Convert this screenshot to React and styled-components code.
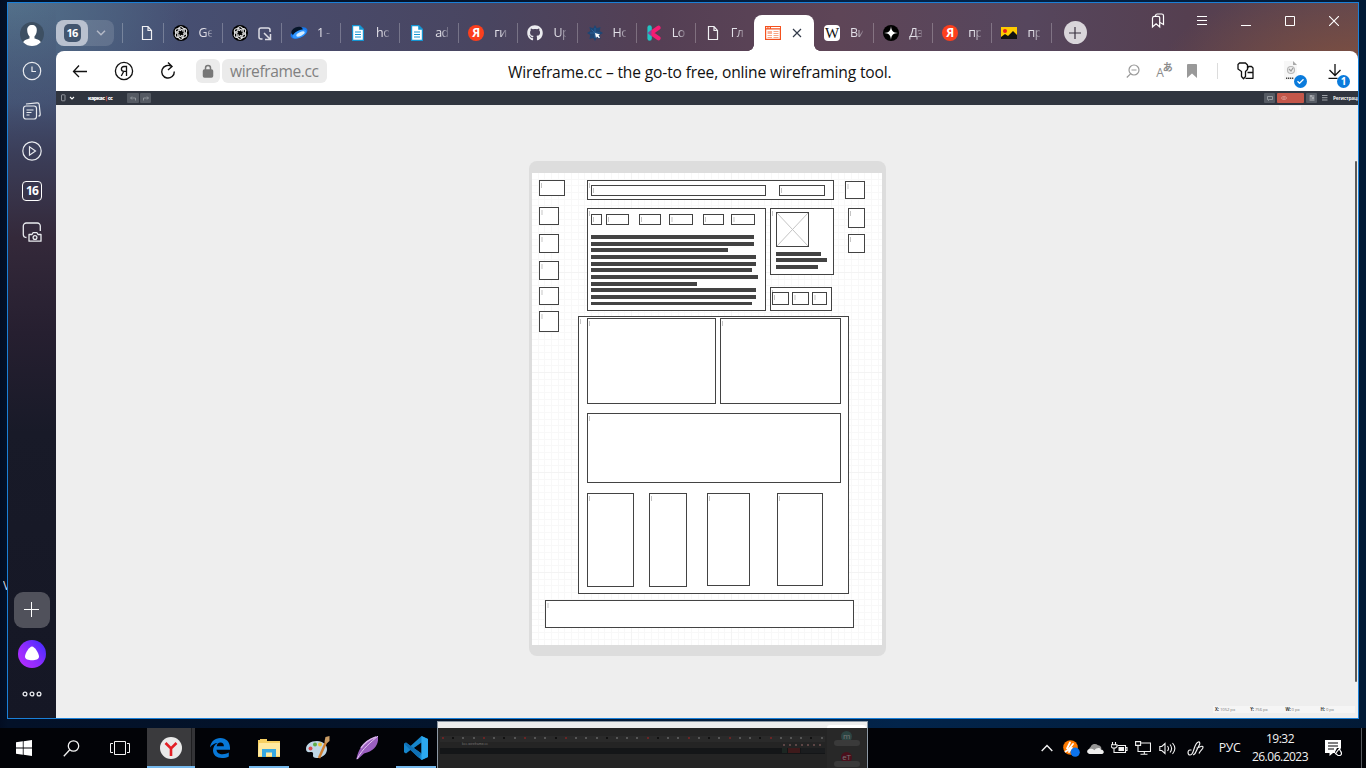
import React from 'react';
import styled, { createGlobalStyle, css } from 'styled-components';
import { FaGithub } from 'react-icons/fa';

const Global = createGlobalStyle`
  * { box-sizing: border-box; }
  body { margin: 0; overflow: hidden; font-family: "Open Sans", "Noto Sans", sans-serif; }
  svg { display: block; flex: none; }
`;

const Desktop = styled.div`
  width: 1366px;
  height: 768px;
  display: flex;
  flex-direction: column;
  position: relative;
  overflow: hidden;
  background: linear-gradient(90deg, #020d22 0, #031128 8px, #03142c 450px, #02244a 900px, #021a36 1366px);
`;

const DesktopLabel = styled.span`
  position: absolute;
  left: 3px;
  top: 578px;
  width: 4px;
  overflow: hidden;
  font-size: 12px;
  line-height: 15px;
  color: #d5d9e0;
`;

const BrowserWindow = styled.div`
  position: relative;
  margin: 2px 0 0 7px;
  width: 1352px;
  height: 717px;
  flex: none;
  display: flex;
  border: 1px solid #1a80d8;
  background:
    linear-gradient(180deg, rgba(23,24,38,0) 0, rgba(60,66,98,0.35) 100px, #3b3e59 150px, #34293a 235px, #261f30 330px, #181a28 430px, #151725 715px) 0 0 / 48px 100% no-repeat,
    radial-gradient(ellipse 180px 130px at 0 0, #53708a, rgba(83,112,138,0)),
    radial-gradient(ellipse 200px 90px at 1352px 70px, #80503f, rgba(128,80,63,0)),
    linear-gradient(90deg, #46587a 0, #465073 150px, #484a6a 300px, #494560 480px, #543f54 650px, #5e4557 830px, #56465d 1020px, #553f50 1180px, #5e4650 1352px);
`;

const Sidebar = styled.nav`
  width: 48px;
  padding: 18px 0 10px;
  display: flex;
  flex-direction: column;
  align-items: center;
  color: #e9ebef;
`;

const SideItem = styled.div`
  height: ${p => p.$h || 40}px;
  width: 36px;
  display: flex;
  align-items: center;
  justify-content: center;
`;

const Spacer = styled.div`flex: 1;`;

const Avatar = styled.div`
  width: 24px;
  height: 24px;
  border-radius: 50%;
  overflow: hidden;
  background: #3d4f62;
`;

const SideBadge = styled.div`
  width: 20px;
  height: 20px;
  border: 1.5px solid #fff;
  border-radius: 4px;
  font: 700 12px/17px "Open Sans", sans-serif;
  letter-spacing: -0.8px;
  text-align: center;
  color: #fff;
`;

const AddPanel = styled.div`
  width: 36px;
  height: 36px;
  border-radius: 9px;
  background: #50515b;
  display: flex;
  align-items: center;
  justify-content: center;
`;

const Alice = styled.div`
  width: 28px;
  height: 28px;
  border-radius: 50%;
  background: linear-gradient(50deg, #b32cff 10%, #8a2cff 50%, #4a2cff 90%);
`;

const Main = styled.div`
  flex: 1;
  min-width: 0;
  display: flex;
  flex-direction: column;
`;

const TabStrip = styled.div`
  height: 48px;
  flex: none;
  display: flex;
`;

const TabGroup = styled.div`
  margin: 17px 8px 0 0;
  width: 58px;
  height: 26px;
  border-radius: 8px;
  display: flex;
  background: rgba(255,255,255,0.13);
`;

const GroupCount = styled.div`
  width: 32px;
  border-radius: 8px;
  background: #b9c1cf;
  display: flex;
  align-items: center;
  justify-content: center;
  span {
    width: 17px;
    height: 18px;
    border-radius: 5px;
    background: #43566f;
    color: #fff;
    font: 700 11px/18px "Open Sans", sans-serif;
    letter-spacing: -0.7px;
    text-align: center;
  }
`;

const GroupArrow = styled.div`
  flex: 1;
  display: flex;
  align-items: center;
  justify-content: center;
`;

const Tab = styled.div`
  width: ${p => p.$w || 59.15}px;
  padding: 12px 0 0 ${p => p.$pad ?? 9}px;
  display: flex;
  align-items: center;
  height: 48px;
  position: relative;
  ${p => p.$line && css`
    &::before {
      content: '';
      position: absolute;
      left: 0;
      top: 20px;
      width: 1px;
      height: 20px;
      background: rgba(255,255,255,0.25);
    }
  `}
`;

const TabIcon = styled.div`
  width: 18px;
  height: 18px;
  display: flex;
  align-items: center;
  justify-content: center;
`;

const MoveIcon = styled.div`margin: 1px 0 0 9px;`;

const TabText = styled.span`
  margin-left: 9px;
  width: 13px;
  overflow: hidden;
  white-space: nowrap;
  font-size: 12.5px;
  line-height: 18px;
  letter-spacing: -0.5px;
  color: #e2e0e8;
  mask-image: linear-gradient(90deg, #000 45%, rgba(0,0,0,0.25) 100%);
`;

const ActiveTab = styled.div`
  width: 60px;
  height: 36px;
  margin-top: 12px;
  padding: 0 12px 0 11px;
  border-radius: 8px 8px 0 0;
  background: #fff;
  display: flex;
  align-items: center;
  justify-content: space-between;
  position: relative;
  &::before, &::after {
    content: '';
    position: absolute;
    bottom: 0;
    width: 6px;
    height: 6px;
  }
  &::before { left: -6px; background: radial-gradient(circle at 0 0, transparent 5.5px, #fff 6px); }
  &::after { right: -6px; background: radial-gradient(circle at 100% 0, transparent 5.5px, #fff 6px); }
`;

const RoundIcon = styled.div`
  width: 16px;
  height: 16px;
  border-radius: ${p => p.$r || '50%'};
  background: ${p => p.$bg};
  color: ${p => p.$c || '#fff'};
  display: flex;
  align-items: center;
  justify-content: center;
  font: ${p => p.$font || '700 12px/16px "Open Sans", sans-serif'};
`;

const NewTab = styled.div`
  width: 23px;
  height: 23px;
  margin: 18px 0 0 12px;
  border-radius: 50%;
  background: #d9d5da;
  display: flex;
  align-items: center;
  justify-content: center;
`;

const WindowButtons = styled.div`
  margin-left: auto;
  margin-right: 2px;
  height: 36px;
  display: flex;
  color: #fff;
  div {
    width: 44px;
    display: flex;
    align-items: center;
    justify-content: center;
  }
`;

const AddressBar = styled.div`
  height: 40px;
  flex: none;
  background: #fff;
  border-radius: 8px 8px 0 0;
  display: flex;
  align-items: center;
  position: relative;
`;

const BarButton = styled.div`
  width: ${p => p.$w || 44}px;
  height: 40px;
  padding-left: ${p => p.$pl || 0}px;
  display: flex;
  align-items: center;
  justify-content: center;
  position: relative;
`;

const Lock = styled.div`
  width: 24px;
  height: 24px;
  margin-left: 6px;
  border-radius: 6px;
  background: #ebebeb;
  display: flex;
  align-items: center;
  justify-content: center;
`;

const Domain = styled.div`
  width: 105px;
  height: 24px;
  margin-left: 2px;
  padding-left: 8px;
  border-radius: 6px;
  background: #ebebeb;
  font: 15.6px/24px "Open Sans", sans-serif;
  letter-spacing: -0.43px;
  color: #808080;
`;

const PageTitle = styled.div`
  width: 386px;
  margin-left: 181px;
  font-size: 15.6px;
  line-height: 24px;
  padding-top: 1px;
  letter-spacing: -0.16px;
  white-space: nowrap;
  color: #111;
`;

const BarTools = styled.div`
  margin-left: auto;
  display: flex;
  align-items: center;
`;

const BarDivider = styled.div`
  width: 1px;
  height: 16px;
  background: #dcdcdc;
`;

const Badge = styled.div`
  position: absolute;
  right: ${p => p.$right}px;
  bottom: 3px;
  width: 13px;
  height: 13px;
  border-radius: 50%;
  background: #0a7bdc;
  color: #fff;
  font: 700 10px/13px "Open Sans", sans-serif;
  display: flex;
  align-items: center;
  justify-content: center;
`;

const ScriptIcon = styled.div`
  display: flex;
  color: #8c8c8c;
  font: 12px/12px "Open Sans", sans-serif;
  span { margin-top: 4px; }
  b { font: 700 10px/10px "Noto Sans CJK JP", sans-serif; margin: -1px 0 0 -1px; }
`;

const AppHeader = styled.header`
  height: 14px;
  flex: none;
  background: #30353f;
  display: flex;
  align-items: center;
  color: #eee;
  padding-left: 5px;
  overflow: hidden;
`;

const AppLogo = styled.div`
  margin-left: 13px;
  width: 39px;
  font: 800 5.2px/10px "Open Sans", sans-serif;
  letter-spacing: -0.5px;
  color: #fff;
  i { color: #e05a48; font-style: normal; margin: 0 0.5px; }
`;

const AppButton = styled.div`
  width: ${p => p.$w || 11}px;
  height: 10px;
  margin-right: ${p => p.$gap ?? 2}px;
  padding-left: ${p => p.$pl || 0}px;
  border-radius: 1px;
  background: ${p => p.$bg || '#555a63'};
  display: flex;
  align-items: center;
  justify-content: ${p => (p.$pl ? 'flex-start' : 'center')};
`;

const AppRight = styled.div`
  margin-left: auto;
  display: flex;
  align-items: center;
`;

const Register = styled.span`
  width: 25px;
  margin-left: 5px;
  overflow: hidden;
  white-space: nowrap;
  font: 700 4.8px/10px "Open Sans", sans-serif;
  letter-spacing: -0.2px;
`;

const Workspace = styled.div`
  flex: 1;
  background: #eeeeee;
  position: relative;
`;

const Hint = styled.div`
  position: absolute;
  right: 57px;
  top: 1px;
  width: 22px;
  height: 4px;
  background: #fafafa;
`;

const Scroll = styled.div`
  position: absolute;
  right: 1px;
  top: 56px;
  width: 2px;
  height: 521px;
  background: #5a5a5a;
  border-radius: 1px;
`;

const Status = styled.div`
  position: absolute;
  right: 3px;
  bottom: 5px;
  width: 142px;
  height: 7px;
  padding-left: 2px;
  background: #f5f5f5;
  display: grid;
  grid-template-columns: repeat(4, 35.2px);
  font: 4.3px/7px "Open Sans", sans-serif;
  letter-spacing: -0.1px;
  color: #777;
  b { color: #333; }
`;

const Device = styled.div`
  position: absolute;
  left: 473px;
  top: 56px;
  width: 357px;
  height: 495px;
  padding: 12px 4px 11px 3px;
  border-radius: 8px;
  background: #dddddd;
`;

const Sheet = styled.div`
  position: relative;
  height: 472px;
  background:
    linear-gradient(90deg, #f3f3f3 1px, transparent 1px) -1px 0 / 100px 100px,
    linear-gradient(#f3f3f3 1px, transparent 1px) 0 -1px / 100px 100px,
    repeating-linear-gradient(90deg, #f8f8f8 0 1px, transparent 1px 6.667px) -1px 0 / 100px 100px,
    repeating-linear-gradient(#f8f8f8 0 1px, transparent 1px 6.667px) 0 -1px / 100px 100px,
    #fff;
`;

const Frame = styled.div`
  position: absolute;
  left: ${p => p.$x - 532}px;
  top: ${p => p.$y - 173}px;
  width: ${p => p.$r - p.$x}px;
  height: ${p => p.$b - p.$y}px;
  border: 1px solid #434343;
  background: #fff;
  &::before {
    content: '';
    position: absolute;
    left: 1px;
    top: 2px;
    width: ${p => (p.$soft ? 2 : 1)}px;
    height: 5px;
    background: ${p => (p.$soft ? '#e2e2e2' : '#c4c4c4')};
    display: ${p => (p.$plain ? 'none' : 'block')};
  }
`;

const TextBar = styled.div`
  position: absolute;
  left: ${p => p.$x - 532}px;
  top: ${p => p.$y - 173}px;
  width: ${p => p.$r - p.$x}px;
  height: ${p => p.$h || 4}px;
  background: #434343;
`;

const Taskbar = styled.footer`
  margin-top: 9px;
  height: 40px;
  flex: none;
  display: flex;
  background: #020307;
  color: #f2f2f2;
`;

const Task = styled.div`
  width: ${p => p.$w || 49}px;
  height: 40px;
  padding-right: ${p => p.$pr || 0}px;
  display: flex;
  align-items: center;
  justify-content: center;
  position: relative;
  ${p => p.$current && css`
    background: linear-gradient(90deg, #3a3a3d 0 44px, #1e1e20 44px 45px, #343437 45px);
  `}
  ${p => p.$open && css`
    &::after {
      content: '';
      position: absolute;
      left: ${p.$current ? 0 : 4.5}px;
      right: ${p.$current ? 0 : 4.5}px;
      bottom: 0;
      height: 2px;
      background: #76b9ed;
    }
  `}
`;

const Tray = styled.div`
  margin-left: auto;
  display: flex;
`;

const TrayIcon = styled.div`
  width: ${p => p.$w || 24}px;
  padding-right: ${p => p.$pr || 0}px;
  display: flex;
  align-items: center;
  justify-content: center;
`;

const Language = styled.div`
  width: 37px;
  text-align: center;
  font: 12.3px/40px "Open Sans", sans-serif;
  letter-spacing: -0.4px;
`;

const Clock = styled.div`
  width: 64px;
  margin-right: 10px;
  padding-top: 2px;
  text-align: center;
  font: 12px/18px "Open Sans", sans-serif;
  letter-spacing: -0.5px;
`;

const ShowDesktop = styled.div`
  width: 5px;
  margin-left: 12px;
  border-left: 1px solid #55585e;
`;

const Preview = styled.div`
  position: absolute;
  left: 437px;
  top: 721px;
  width: 431px;
  height: 47px;
  border: 1px solid #8c98a4;
  border-bottom: 0;
  display: flex;
  overflow: hidden;
  background: linear-gradient(#ededed 6px, #242424 6px);
`;

const PreviewMain = styled.div`
  width: 389px;
  padding: 14px 2px 0;
  font: 3.5px/5px "Liberation Sans", sans-serif;
  color: #4a4a4a;
`;

const PreviewTabs = styled.div`
  display: flex;
  justify-content: space-between;
  padding: 0 2px;
  height: 6px;
  background: #2a2a2a;
  i { width: 2px; height: 2px; margin-top: 1px; background: #555; }
  i:nth-of-type(4n + 1) { background: #6a2525; }
  i:nth-of-type(5n + 2) { background: #111; }
`;

const PreviewBar = styled.div`
  height: 6px;
  padding: 0 4px 0 22px;
  display: flex;
  gap: 4px;
  color: #777;
  i { width: 2px; height: 2px; margin-top: 2px; background: #5c4545; }
  i:first-of-type { margin-left: auto; }
`;

const PreviewDark = styled.div`
  height: 6px;
  background: #141618;
  display: flex;
  justify-content: flex-end;
  gap: 1px;
  i { height: 5px; width: 5px; background: #1c2622; }
  i + i { width: 12px; background: #3e1a1b; }
  i + i + i { width: 24px; background: #1b1d1f; }
`;

const PreviewCalls = styled.div`
  width: 39px;
  margin-top: 3px;
  border-radius: 3px 3px 0 0;
  background: linear-gradient(#fff 3px, #282828 3px);
  display: flex;
  flex-direction: column;
  align-items: center;
  padding: 6px 0 0;
  gap: 4px;
`;

const Caller = styled.div`
  width: 32px;
  height: 20px;
  display: flex;
  flex-direction: column;
  align-items: center;
  b {
    width: 11px;
    height: 11px;
    flex: none;
    border-radius: 50%;
    background: ${p => p.$c};
    color: #777;
    text-align: center;
    font: 8px/10px "Open Sans", sans-serif;
    letter-spacing: -0.3px;
  }
  span {
    margin-top: -2px;
    width: 26px;
    height: 6px;
    flex: none;
    border-radius: 3px;
    background: #3a3a3a;
  }
`;

const S = ({ w = 20, h = w, sw = 1.2, children, ...rest }) => (
  <svg width={w} height={h} viewBox={`0 0 ${w} ${h}`} fill="none" stroke="currentColor" strokeWidth={sw} {...rest}>{children}</svg>
);

const PageIcon = () => (
  <S w={12} h={16} sw={1.2} color="#f0f0f3"><path d="M1.500 1.500h5.500l3.500 4v9h-9zM7 1.500v4h3.500" /></S>
);
const GptIcon = () => (
  <RoundIcon $bg="#000">
    <S w={16} sw={1.1} color="#e8e8e8">
      {[0, 60, 120, 180, 240, 300].map(a => (
        <path key={a} transform={`rotate(${a} 8 8)`} d="M8 5.700L5.800 4.500V4a2.200 2.200 0 0 1 4.200-1l1.200.8V8" />
      ))}
    </S>
  </RoundIcon>
);
const DocIcon = () => (
  <S w={14} h={16} stroke="none"><path d="M1 0h8l4 4v12H1z" fill="#1595d2" /><path d="M2.200 1.200h6v3.600h3.600v10H2.200z" fill="#fff" /><path d="M4 7h6M4 9.500h6M4 12h6" stroke="#1595d2" /></S>
);
const YaIcon = () => <RoundIcon $bg="#fc3f1d">Я</RoundIcon>;
const ArrowSquare = () => (
  <S w={14} h={14} sw={1.500} color="#dcdce4"><path d="M4.500 12H3a2 2 0 0 1-2-2V3a2 2 0 0 1 2-2h7a2 2 0 0 1 2 2v2M6 6l6 6M12.500 7v5.500H7" /></S>
);
const Planet = () => (
  <S w={18} h={16} stroke="none"><ellipse cx="9" cy="8" rx="9" ry="4.800" transform="rotate(-25 9 8)" fill="#1476ed" /><ellipse cx="7" cy="6" rx="6" ry="3.800" transform="rotate(-25 7 6)" fill="#061528" /><ellipse cx="9.500" cy="9" rx="7.500" ry="3.500" transform="rotate(-25 9.500 9)" fill="#3096ff" /><ellipse cx="10.500" cy="9" rx="4.500" ry="1.800" transform="rotate(-25 10.500 9)" fill="#d5ecff" /></S>
);
const StarCursor = () => (
  <S w={16} stroke="none"><path d="M8 0l1.800 3.300L13.500 2l-.8 4L16 8l-3.300 2 .8 4-3.700-1L8 16l-1.800-3-3.700 1 .8-4L0 8l3.300-2-.8-4 3.700 1.300z" fill="#1d4675" /><path d="M3 8h10M8 3v10M4.500 4.500l7 7" stroke="#2f6ca3" strokeWidth=".7" /><path d="M8 8l5 1.500-1.500 1 1.500 2-1 .8L10 11.500 9 13z" fill="#fff" /></S>
);
const KIcon = () => (
  <S w={16} strokeLinecap="round"><path d="M3.600 2.400v11.200" stroke="#22c3c3" strokeWidth="4.400" /><path d="M12.500 2.800L5 8l7.500 5.200" stroke="#f61d73" strokeWidth="4.200" strokeLinejoin="round" /><path d="M1.500 8l4-3v6z" fill="#85459b" stroke="none" /></S>
);
const Spark = () => (
  <RoundIcon $bg="#000"><S w={14} stroke="none"><path d="M7 0c.4 5 2 6.600 7 7-5 .4-6.600 2-7 7-.4-5-2-6.600-7-7 5-.4 6.600-2 7-7z" fill="#fff" /></S></RoundIcon>
);
const ImageIcon = () => (
  <S w={16} h={12} stroke="none"><path d="M0 0h16v12H0z" fill="#fc0" /><path d="M0 12V10l4-3 3 2 5-5 4 4v4z" fill="#111" /><circle cx="4" cy="4" r="2" fill="#e81e1e" /></S>
);
const SiteIcon = () => (
  <S w={16} h={14} stroke="none"><path d="M0 0h16v14H0z" fill="#f4511e" /><path d="M1.200 3.500h13.600v9.300H1.200z" fill="#fff" /><path d="M1.200 1h1.200v1.300H1.200zM3.500 1h1.200v1.300H3.500zM6 1h9v1.300H6z" fill="#fff" /><path d="M2.500 5h4.500v3H2.500z" fill="#fbb29a" /><path d="M2.500 9.500H7M2.500 11.500H7M8.500 5.500h5M8.500 7.500h5M8.500 9.500h5M8.500 11.500h5" stroke="#f9a685" strokeWidth="1" /></S>
);

const tabsBefore = [
  [<GptIcon />, 'Ge'], [<GptIcon />, null], [<Planet />, '1 -'], [<DocIcon />, 'ho'], [<DocIcon />, 'ad'],
  [<YaIcon />, 'ги'], [<FaGithub size={16} color="#ececf0" />, 'Up'], [<StarCursor />, 'Ho'], [<KIcon />, 'Lo'], [<PageIcon />, 'Гл'],
];
const tabsAfter = [
  [<RoundIcon $bg="#fff" $c="#111" $r="4px" $font='15px/16px "Liberation Serif", serif'>W</RoundIcon>, 'Ви'],
  [<Spark />, 'Дз'], [<YaIcon />, 'пр'], [<ImageIcon />, 'пр'],
];

// left, top, right, bottom, soft label mark
const frames = [
  [539, 180, 565, 196], [539, 207, 559, 225, 1], [539, 234, 559, 253, 1], [539, 261, 559, 280, 1],
  [539, 287, 559, 305, 1], [539, 311, 559, 332, 1],
  [587, 180, 834, 200], [591, 185, 766, 196], [779, 185, 825, 196],
  [845, 181, 865, 199, 1], [848, 208, 865, 228], [848, 234, 865, 253],
  [587, 208, 766, 311], [591, 214, 602, 225], [606, 214, 629, 225], [639, 214, 661, 225],
  [669, 214, 693, 225, 1], [703, 214, 724, 225], [731, 214, 755, 225, 1],
  [770, 208, 834, 275], [770, 287, 832, 311], [772, 292, 789, 305], [792, 292, 809, 305, 1], [812, 292, 827, 305, 1],
  [578, 316, 849, 594], [587, 318, 716, 404], [720, 318, 841, 404], [587, 413, 841, 483],
  [587, 493, 634, 587], [649, 493, 687, 587], [707, 493, 750, 586], [777, 493, 823, 586],
  [545, 600, 854, 628, 1],
];
// left, top, right, height
const bars = [
  [591, 235, 754], [591, 242, 754], [591, 248, 728], [591, 255, 756], [591, 262, 756], [591, 268, 752],
  [591, 275, 758], [591, 282, 697], [591, 288, 756], [591, 295, 756], [591, 302, 752, 3],
  [776, 252, 821], [776, 258, 827], [776, 265, 818],
];

function SidePanel() {
  return (
    <Sidebar>
      <SideItem $h={25}>
        <Avatar><S w={24} stroke="none"><path d="M12 3c3 0 5 2 4.800 5.200-.1 2.800-1 4.800-2.300 6v2.300c3 .8 6 1.600 6.600 4.500H3c.6-2.900 3.600-3.700 6.500-4.500v-2.300C8.200 13 7.300 11 7.200 8.200 7 5 9 3 12 3z" fill="#fff" /><path d="M4 20.500h16v3.500H4z" fill="#fff" /></S></Avatar>
      </SideItem>
      <SideItem $h={50}><S w={20} sw={1.2}><circle cx="10" cy="10" r="8.700" /><path d="M10 5.500V10.500h4" /></S></SideItem>
      <SideItem $h={30}><S w={20} sw={1.2}><rect x="1.500" y="5" width="13" height="13" rx="2.500" /><path d="M4.500 9h7M4.500 11.500h5M4.500 14h3M4 3l11-1.200a2 2 0 0 1 2.200 1.700l1 9.500a2 2 0 0 1-1.700 2.200" /></S></SideItem>
      <SideItem $h={50}><S w={20} sw={1.2}><circle cx="10" cy="10" r="9.200" /><path d="M7.500 5.800v8.400l6-4.200z" /></S></SideItem>
      <SideItem $h={30}><SideBadge>16</SideBadge></SideItem>
      <SideItem $h={52}><S w={20} sw={1.3}><path d="M4.500 15.500a3.200 3.200 0 0 1-3.200-3.200V4A3 3 0 0 1 4.300 1h11a3 3 0 0 1 3 3v5" /><path d="M7 12.500h3l1-1.800h4l1 1.800h3v6.700H7z" strokeLinejoin="round" /><circle cx="13" cy="15.500" r="1.900" /></S></SideItem>
      <Spacer />
      <SideItem $h={36}><AddPanel><S w={16} sw={1}><path d="M7.500 0v15M0 7.500h15" stroke="#fff" /></S></AddPanel></SideItem>
      <SideItem $h={52}><Alice><S w={28} stroke="none"><path d="M14 6.500c2.800 0 7 7 7 10s-3.400 3.700-7 3.700-7-.7-7-3.700 4.200-10 7-10z" fill="#fff" /></S></Alice></SideItem>
      <SideItem $h={28}><S w={20} h={6} sw={1.300}><circle cx="3" cy="3" r="1.900" /><circle cx="10" cy="3" r="1.900" /><circle cx="17" cy="3" r="1.900" /></S></SideItem>
    </Sidebar>
  );
}

function Tabs() {
  return (
    <TabStrip>
      <TabGroup>
        <GroupCount><span>16</span></GroupCount>
        <GroupArrow><S w={10} h={6} sw={1.500} color="#b4b9c7"><path d="M1 .8l4 4 4-4" /></S></GroupArrow>
      </TabGroup>
      <Tab $line $w={40.6} $pad={15.5}><TabIcon><PageIcon /></TabIcon></Tab>
      {tabsBefore.map(([icon, text], i) => (
        <Tab key={i} $line>
          <TabIcon>{icon}</TabIcon>
          {text ? <TabText>{text}</TabText> : <MoveIcon><ArrowSquare /></MoveIcon>}
        </Tab>
      ))}
      <ActiveTab>
        <SiteIcon />
        <S w={10} sw={1.2} color="#333b4a"><path d="M1 1l8 8M9 1l-8 8" /></S>
      </ActiveTab>
      {tabsAfter.map(([icon, text], i) => (
        <Tab key={i} $line={i > 0}><TabIcon>{icon}</TabIcon><TabText>{text}</TabText></Tab>
      ))}
      <Tab $line $w={1} $pad={0} />
      <NewTab><S w={12} sw={1.2} color="#39313f"><path d="M6 0v12M0 6h12" /></S></NewTab>
      <WindowButtons>
        <div><S w={14} h={16} sw={1.2}><path d="M1.500 5a2 2 0 0 1 2-1.700h3.700a1.500 1.500 0 0 1 1.500 1.500V14l-3.600-3.200L1.500 14z" /><path d="M4.500 3V2.500A1.800 1.800 0 0 1 6.300 1h4.400a1.800 1.800 0 0 1 1.800 1.800V11.500L9 9.500" /></S></div>
        <div><S w={12} sw={1}><path d="M1 1.500h10M1 5.500h10M1 9.500h10" /></S></div>
        <div><S w={10} sw={1}><path d="M0 9.500h10" /></S></div>
        <div><S w={10} sw={1}><path d="M.5.5h9v9h-9z" /></S></div>
        <div><S w={10} sw={1.1}><path d="M0 0l10 10M10 0L0 10" /></S></div>
      </WindowButtons>
    </TabStrip>
  );
}

function Address() {
  return (
    <AddressBar>
      <BarButton $w={48}><S w={16} sw={1.300} color="#111"><path d="M15 8.500H1.500M7 2.500l-5.500 6 5.500 5.500" /></S></BarButton>
      <BarButton $w={40}><S w={20} sw={1.300} color="#111"><circle cx="10" cy="10" r="8.600" /><path d="M12.500 15V5.500H10c-3.500 0-3.500 4.800 0 4.800h2.500M9.800 10.300L7.300 15" /></S></BarButton>
      <BarButton $w={46} $pl={2}><S w={18} sw={1.400} color="#111"><path d="M12.500 4.500A6.300 6.300 0 1 0 15.300 9.500M9 .5l4 4-4 3.500" /></S></BarButton>
      <Lock><S w={12} h={14} sw={1.500} color="#777"><rect x="1.500" y="6" width="9" height="7" rx="1" fill="currentColor" /><path d="M3.500 6V4a2.500 2.500 0 0 1 5 0v2" /></S></Lock>
      <Domain>wireframe.cc</Domain>
      <PageTitle>Wireframe.cc – the go-to free, online wireframing tool.</PageTitle>
      <BarTools>
        <BarButton $w={30}><S w={14} color="#999"><circle cx="8" cy="6" r="5" /><path d="M4.500 9.800L.8 13.500M5.500 6h5" /></S></BarButton>
        <BarButton $w={33}><ScriptIcon><span>A</span><b>あ</b></ScriptIcon></BarButton>
        <BarButton $w={22}><S w={10} h={14} stroke="none"><path d="M1 0h8a1 1 0 0 1 1 1v13L5 9.500 0 14V1a1 1 0 0 1 1-1z" fill="#999" /></S></BarButton>
        <BarButton $w={28}><BarDivider /></BarButton>
        <BarButton $w={30}><S w={18} h={18} sw={1.300} color="#111" strokeLinejoin="round"><path d="M2.500 1h6L10.500 3v4.500L8.500 9.500v5L6.500 16.700 4.500 14.500V9.500L1 7V2.500z" /><path d="M10.500 6.500l1-2h3L16 6v10.300H8.500M10.500 10.500H16.500" /></S></BarButton>
        <BarButton $w={50} $pl={10}>
          <S w={14} h={20} stroke="none"><path d="M0 0h9l4 4v15H0z" fill="#f7f7f7" /><path d="M9 0l4 4H9z" fill="#aaa" /><circle cx="7" cy="9" r="3.500" stroke="#b8b8b8" fill="#eee" /><path d="M5 8l2 2 2-3" stroke="#999" /><path d="M2 17.200h8" stroke="#444" strokeWidth="1.500" strokeDasharray="1.300 .7" /></S>
          <Badge $right={4}><S w={7} h={5} sw={1.300}><path d="M.5 2.300l2 2 4-4" /></S></Badge>
        </BarButton>
        <BarButton $w={47}>
          <S w={14} h={16} sw={1.300} color="#111"><path d="M7 1v11M1.500 7L7 12.500 12.500 7M.5 15.300h9" /></S>
          <Badge $right={8}>1</Badge>
        </BarButton>
      </BarTools>
    </AddressBar>
  );
}

export default function App() {
  return (
    <>
      <Global />
      <Desktop>
        <DesktopLabel>V</DesktopLabel>
        <BrowserWindow>
          <SidePanel />
          <Main>
            <Tabs />
            <Address />
            <AppHeader>
              <S w={14} h={8} sw={.8} color="#a7abb1"><rect x=".5" y=".8" width="3.500" height="6" rx=".5" /><path d="M9 3l2 2 2-2" stroke="#fff" strokeWidth="1.100" /></S>
              <AppLogo>каркас<i>|</i>cc</AppLogo>
              <AppButton $w={12} $gap={1}><S w={6} h={5} sw={.8} color="#9b9fa5"><path d="M2 .5L.6 2 2 3.500M.6 2H5.500v2.500" /></S></AppButton>
              <AppButton $w={11}><S w={6} h={5} sw={.8} color="#9b9fa5"><path d="M4 .5L5.400 2 4 3.500M5.400 2H.5v2.500" /></S></AppButton>
              <AppRight>
                <AppButton><S w={6} h={5} sw={.8} color="#a5a8ad"><path d="M.5.5h5v3h-3l-1 1v-1h-1z" /></S></AppButton>
                <AppButton $w={27} $bg="#c4574a" $pl={4}><S w={6} h={4} sw={.7} color="#e4a39b"><ellipse cx="3" cy="2" rx="2.500" ry="1.500" /><circle cx="3" cy="2" r=".5" /></S></AppButton>
                <AppButton $gap={5}><S w={6} h={6} sw={.8} color="#d0d2d5"><path d="M.5 1h5M.5 3h5M.5 5h5M2 0v2M4 2v2" /></S></AppButton>
                <S w={6} h={6} sw={.8} color="#b9bcc0"><path d="M0 .5h5.500M0 2.700h5.500M0 5h5.500" /></S>
                <Register>Регистрация</Register>
              </AppRight>
            </AppHeader>
            <Workspace>
              <Device>
                <Sheet>
                  {frames.map(([x, y, r, b, soft], i) => <Frame key={i} $x={x} $y={y} $r={r} $b={b} $soft={soft} />)}
                  <Frame $x={776} $y={212} $r={809} $b={247} $plain>
                    <S w={31} h={33} sw={1} color="#c4c4c4"><path d="M0 0l31 33M31 0L0 33" /></S>
                  </Frame>
                  {bars.map(([x, y, r, h], i) => <TextBar key={i} $x={x} $y={y} $r={r} $h={h} />)}
                </Sheet>
              </Device>
              <Hint />
              <Scroll />
              <Status>
                <span><b>X:</b> 1052 px</span><span><b>Y:</b> 756 px</span><span><b>W:</b> 0 px</span><span><b>H:</b> 0 px</span>
              </Status>
            </Workspace>
          </Main>
        </BrowserWindow>
        <Taskbar>
          <Task $w={48}><S w={16} stroke="none"><path d="M0 2.300L6.800 1.300V7.500H0zM7.600 1.200L16 0v7.500H7.600zM0 8.400h6.800v6.300L0 13.700zM7.600 8.400H16V16l-8.400-1.200z" fill="#fff" /></S></Task>
          <Task $w={48} $pr={1}><S w={17} sw={1.300}><circle cx="10.500" cy="6" r="5.200" /><path d="M6.800 9.700L.8 16.200" /></S></Task>
          <Task $w={51} $pr={3}><S w={20} h={14} sw={1}><path d="M4.500.5h11v13h-11zM3 2.500H.5v9H3M17 2.500h2.500v9H17" /></S></Task>
          <Task $w={48} $pr={1} $current $open>
            <S w={22} stroke="none"><circle cx="11" cy="11" r="11" fill="#e9e9e9" /><path d="M5.500 6L11 11.500 16.500 6M11 11v8" stroke="#e31e24" strokeWidth="2.600" /></S>
          </Task>
          <Task><S w={20} h={20} stroke="none"><path d="M0 9.500C.8 3.500 5 0 10.300 0 16.500 0 20 4.300 20 9.800v2H6.500c.2 3 2.700 4.500 6 4.500 2.400 0 4.500-.6 6.300-1.700v3.800C17 19.500 14.500 20 12 20 6.500 20 3 17 3 12.500c0-3.300 1.700-6 4.600-7.500C4.800 5 2 6.500 0 9.500zM6.700 8.300h7.200C13.900 6 12.700 4.500 10.500 4.500S7 6 6.700 8.300z" fill="#0878d7" /></S></Task>
          <Task $open><S w={22} h={18} stroke="none"><path d="M0 1h2V0h7v2h13v16H0z" fill="#f6cf62" /><path d="M1 4h21v13H0z" fill="#ffe9a0" /><path d="M4 18v-8h14v8h-4v-4.500H8V18z" fill="#37a9e1" /></S></Task>
          <Task><S w={24} h={24} stroke="none"><path d="M11 5C4.500 5 0 8.500 0 13c0 3 2.500 3.500 4.500 3 2.500-.5 3 1 2.500 3s1.500 3.500 5 3c6-.8 9-5 9-9s-4-8-10-8z" fill="#bfd7e6" /><circle cx="4.500" cy="12.500" r="2" fill="#d94b4b" /><circle cx="9" cy="8.500" r="2" fill="#5fae47" /><circle cx="14" cy="8.500" r="2" fill="#f0c23c" /><path d="M21 4l-8 18" stroke="#cf7f32" strokeWidth="2.500" /><path d="M18.500 5.500L19.500 1l4-1v5l-3 2.500z" fill="#c99c65" /></S></Task>
          <Task><S w={22} h={24} stroke="none"><path d="M22 0c1 8-3 15-14 17.500L2 23l-1.500.5C2 14 7 4 22 0z" fill="#9b5fc0" /><path d="M22 0C15 6 7 12 1 23" stroke="#e5c9f2" strokeWidth="1" /><path d="M5 12c4-6 9-9 15-11" stroke="#d9b3ea" strokeWidth="1.500" /></S></Task>
          <Task $open><S w={24} h={24} stroke="none"><path d="M17.500 0L24 3v18l-6.500 3L6.500 14 2 17.500 0 16.300V7.700L2 6.500 6.500 10zM17.500 6.500L9.800 12l7.700 5.500z" fill="#1686cc" fillRule="evenodd" /><path d="M17.500 0L24 3v18l-6.500 3z" fill="#2ca9ef" /><path d="M2 6.500L0 7.700l14.500 14 3-4.200z" fill="#0f70b5" /></S></Task>
          <Tray>
            <TrayIcon><S w={12} h={8} sw={1.400}><path d="M.7 7L6 1.500 11.300 7" /></S></TrayIcon>
            <TrayIcon><S w={17} h={17} stroke="none"><circle cx="7.500" cy="7.500" r="7.300" fill="#ff7a00" /><path d="M2.500 11.500L9 8M4 8.500L7 2.500M5 10l5-6M6 12l2-3" stroke="#fff" strokeWidth="1.800" strokeLinecap="round" /><circle cx="12.200" cy="12.200" r="4.600" fill="#0c73ed" /></S></TrayIcon>
            <TrayIcon><S w={17} h={11} stroke="none"><path d="M3 9a3.500 3.500 0 0 1 .5-5A4.600 4.600 0 0 1 11 2.200c2 .2 3.200 1.500 3.500 3.300L9 10z" fill="#969696" /><path d="M2.500 11c-3.300-.5-3-4.500 0-5 2-.4 3.300.2 5 1.200C9 5 12.500 4 14 6.500c3.500.4 3.500 4 1 4.500z" fill="#eee" /></S></TrayIcon>
            <TrayIcon><S w={17} h={12} sw={1.100}><path d="M6.500 3.500h8v7h-9M14.500 5.500H16v3h-1.500" /><path d="M7.500 5h5.500v4H7.500z" fill="currentColor" stroke="none" /><path d="M1.500 0v2.500M4.500 0v2.500M0 2.700h6v2L4.500 6h-3L.3 4.700zM3 6v4.500h3" /></S></TrayIcon>
            <TrayIcon><S w={16} h={14} sw={1.100}><path d="M3 5v5.500h12.500v-8.500H6M9.300 10.500V13M5.500 13.200h7M.6.600h5v3.800H.6z" /></S></TrayIcon>
            <TrayIcon><S w={17} h={13} sw={1.100}><path d="M.8 4.500h2L6 1.500v10L2.800 8.500h-2zM8.500 4c1.200 1.500 1.200 3.500 0 5M11 2.500c2 2.500 2 5.500 0 8M13.500 1c3 3.500 3 7.500 0 11" /></S></TrayIcon>
            <TrayIcon $w={32}><S w={17} h={15} sw={1.200}><path d="M4.500 9H3C.4 9 .4 14 3 14c2.500 0 3-3 4-6 1-3.200 2.800-6.500 4.300-7 1.700-.3 1.800 1.500 1 3L8 12.500 6.200 14M9.500 7c3-.5 6-3 6.500-1s-2 2.500-4 6.500" /></S></TrayIcon>
            <Language>РУС</Language>
            <Clock>19:32<br />26.06.2023</Clock>
            <TrayIcon $w={27} $pr={4}><S w={17} h={16} stroke="none"><path d="M0 0h16v13H8l-3.500 3V13H0z" fill="#fff" /><path d="M3 3h10M3 6h10M3 9h6" stroke="#020307" strokeWidth="1.200" /><path d="M10 16V12l2-4h3l2 3v5z" fill="#020307" /><path d="M10.500 13.500l4-5c.5 3 2 3 2 5s-3 3-4.500 1z" stroke="#fff" /></S></TrayIcon>
            <ShowDesktop />
          </Tray>
        </Taskbar>
        <Preview>
          <PreviewMain>
            <PreviewTabs>{Array.from({ length: 38 }, (_, i) => <i key={i} />)}</PreviewTabs>
            <PreviewBar><span>kcc.wireframe.cc</span><i /><i /><i /><i /><i /><i /><i /></PreviewBar>
            <PreviewDark><i /><i /><i /></PreviewDark>
          </PreviewMain>
          <PreviewCalls>
            <Caller $c="#2c4442"><b>m</b><span /></Caller>
            <Caller $c="#4a101c"><b>eT</b><span /></Caller>
          </PreviewCalls>
        </Preview>
      </Desktop>
    </>
  );
}
